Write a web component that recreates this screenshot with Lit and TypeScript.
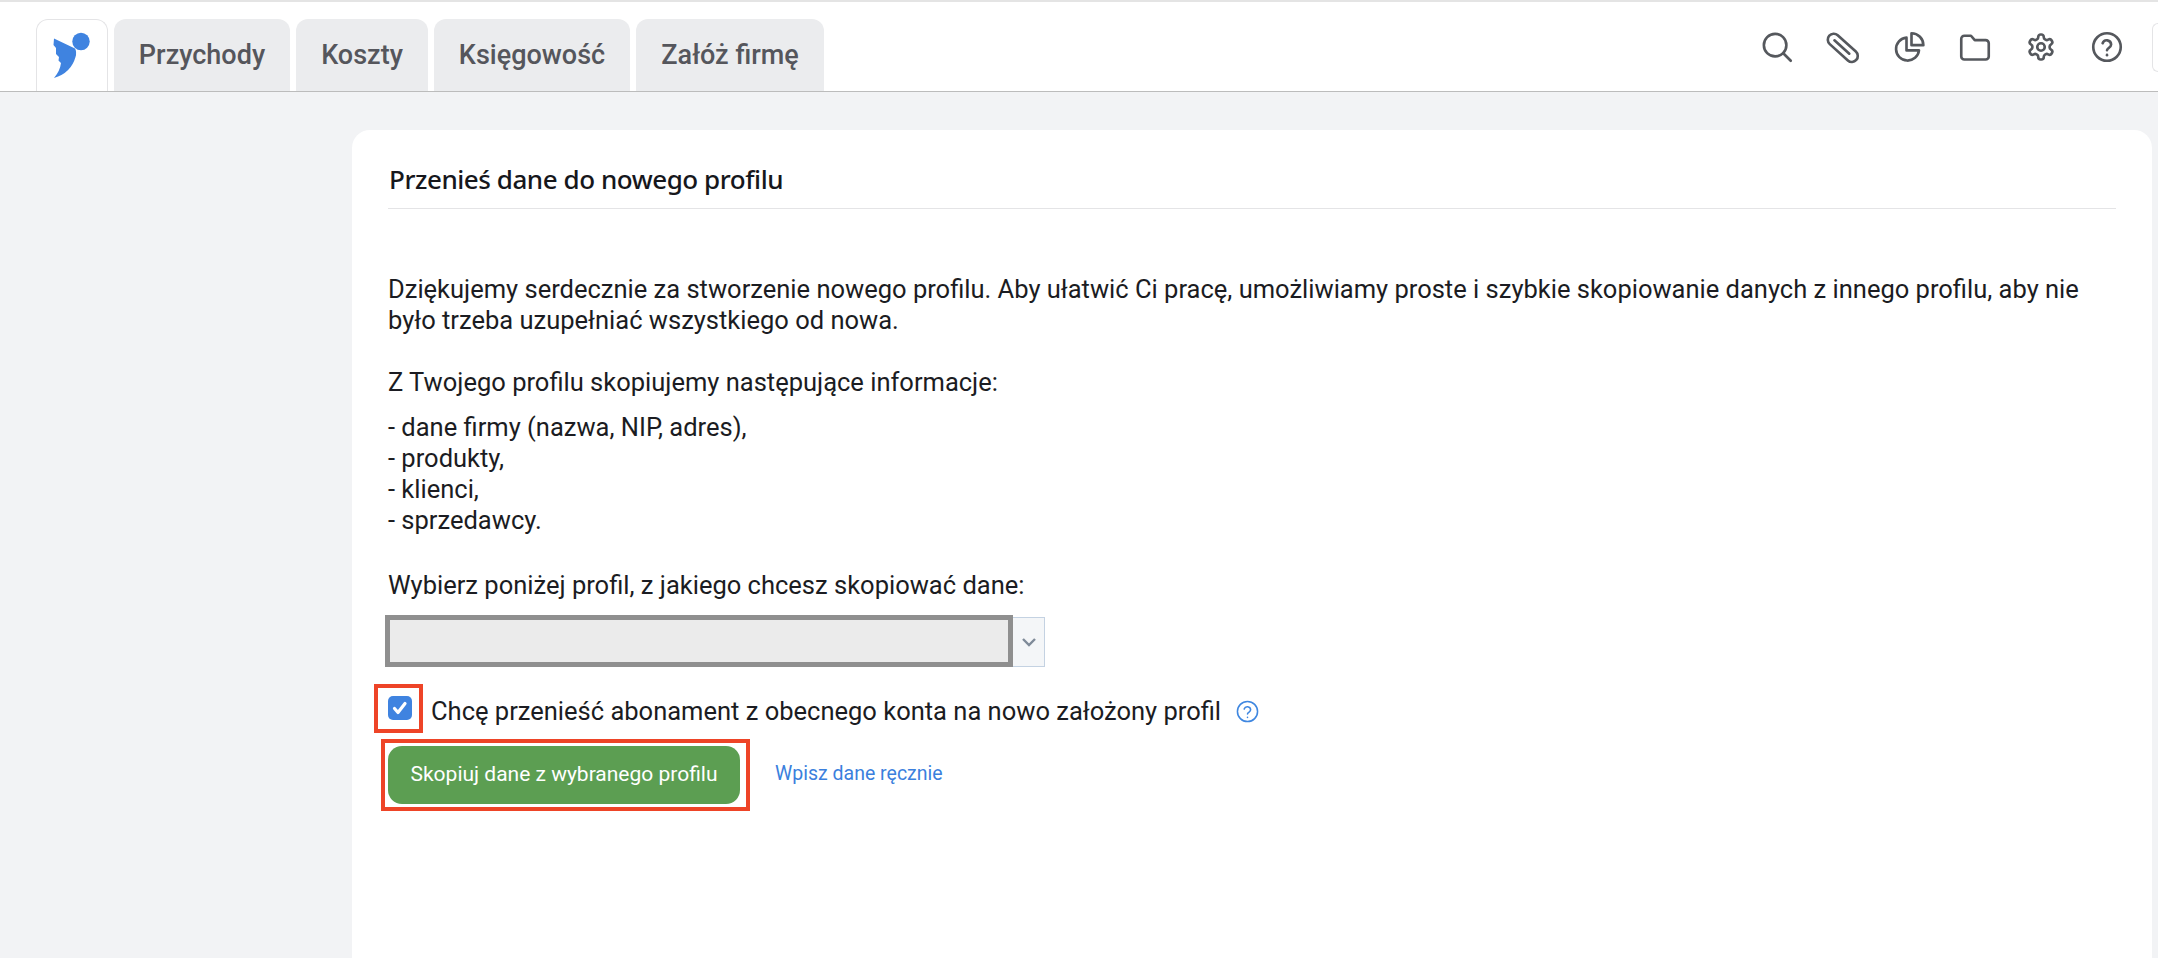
import { LitElement, html, css } from "lit";
import { customElement } from "lit/decorators.js";

@customElement("app-root")
export class AppRoot extends LitElement {
  static styles = css`
    :host { display: block; height: 958px; overflow: hidden; background: #f2f3f5; font-family: Roboto, sans-serif; color: #1b1c22; }
    .topline { height: 2px; background: #e4e4e4; }
    header { height: 90px; box-sizing: border-box; background: #fff; border-bottom: 1px solid #bcbcbc; padding: 17px 0 0 36px; display: flex; align-items: stretch; gap: 6px; position: relative; }
    .logo { width: 72px; box-sizing: border-box; background: #fff; border: 1px solid #e4e4e6; border-bottom: 0; border-radius: 12px 12px 0 0; position: relative; }
    .logo svg { position: absolute; left: -1px; top: -1px; }
    .tab { background: #ebecee; color: #55565c; font-size: 27px; font-weight: 500; border-radius: 12px 12px 0 0; display: flex; align-items: center; justify-content: center; box-sizing: border-box; }
    .icons { margin-left: auto; display: flex; gap: 36px; padding: 13px 36px 0 0; align-items: flex-start; }
    .icons svg { width: 30px; height: 30px; display: block; fill: none; stroke: #55585d; stroke-width: 2.1; stroke-linecap: round; stroke-linejoin: round; overflow: visible; }
    .userbox { position: absolute; right: 0; top: 21px; width: 6px; height: 49px; box-sizing: border-box; border: 1px solid #e4e4e6; border-right: 0; border-radius: 10px 0 0 10px; }
    main { padding: 38px 6px 0 352px; }
    .card { background: #fff; border-radius: 18px 18px 0 0; height: 830px; box-sizing: border-box; padding: 0 36px; }
    h1 { margin: 0; padding: 31px 0 0 1px; height: 79px; box-sizing: border-box; font: 500 26px/36px "Noto Sans", sans-serif; letter-spacing: -0.45px; border-bottom: 1px solid #e4e4e6; color: #16171c; }
    .body { font-size: 25.5px; line-height: 30.8px; }
    p { margin: 0; }
    .p1 { padding-top: 65px; }
    .p2 { padding-top: 31px; }
    .p3 { padding-top: 15px; }
    .p4 { padding-top: 34px; }
    .selectrow { display: flex; margin: 15px 0 0 -3px; width: 660px; height: 52px; }
    .select { width: 628px; box-sizing: border-box; border: 5px solid #8f8f8f; background: #ebebeb; }
    .arrow { flex: 1; margin-top: 2px; box-sizing: border-box; border: 1px solid #c4d2e2; border-left: 0; background: #f4f6f8; display: flex; align-items: center; justify-content: center; }
    .arrow svg { width: 18px; height: 18px; fill: none; stroke: #7f8b99; stroke-width: 2.4; }
    .checkrow { display: flex; align-items: center; margin: 17px 0 0 -14px; height: 49px; }
    .markbox { box-sizing: border-box; border: 4px solid #ee4427; }
    .checkwrap { width: 49px; height: 49px; padding: 8px 0 0 10px; }
    .check { width: 24px; height: 24px; border-radius: 5px; background: #3f83e0; display: flex; align-items: center; justify-content: center; }
    .check svg { width: 16px; height: 16px; fill: none; stroke: #fff; stroke-width: 3.2; stroke-linecap: round; stroke-linejoin: round; }
    .checklabel { margin-left: 8px; position: relative; top: 3px; }
    .help { width: 23px; height: 23px; margin-left: 15px; position: relative; top: 3px; fill: none; stroke: #3f87e0; stroke-width: 1.6; stroke-linecap: round; stroke-linejoin: round; }
    .actions { display: flex; align-items: center; margin: 6px 0 0 -7px; }
    .btnwrap { width: 369px; height: 72px; padding: 3px 6px 3px 3px; }
    button { display: block; width: 100%; height: 100%; border: 0; border-radius: 14px; background: #5c9e52; color: #fff; font: 400 21px/48px Roboto, sans-serif; padding: 0 0 2px; }
    a { margin: -2px 0 0 25px; color: #3b7fdd; font-size: 19.5px; font-weight: 400; text-decoration: none; }
  `;

  render() {
    return html`
      <div class="topline"></div>
      <header>
        <div class="logo">
          <svg width="72" height="72" viewBox="36 19 72 72">
            <circle cx="81" cy="41.5" r="8.7" fill="#3f83e0"></circle>
            <path fill="#3f83e0" d="M54 38.5 L75 48.500 Q77 52 75.500 57 Q71 73 54 78 Q60 71 61 63 L58.500 60.500 L59 57 L56 54 L56 48 L53.500 45 Z"></path>
          </svg>
        </div>
        <div class="tab" style="width:176px">Przychody</div>
        <div class="tab" style="width:132px">Koszty</div>
        <div class="tab" style="width:196px">Księgowość</div>
        <div class="tab" style="width:188px">Załóż firmę</div>
        <div class="icons">
          <svg viewBox="0 0 24 24"><circle cx="10.500" cy="10.500" r="9"></circle><path d="M17 17l6 6"></path></svg>
          <svg viewBox="0 0 24 24"><g transform="rotate(42 12 12.500)"><rect x="-2.500" y="8" width="29" height="9.500" rx="4.750"></rect><path d="M3 12.750H19"></path></g></svg>
          <svg viewBox="0 0 24 24"><path d="M10 4.500a9.200 9.200 0 1 0 10 10.200h-10z"></path><path d="M14 1v9.500h9.500A9.500 9.500 0 0 0 14 1z"></path></svg>
          <svg viewBox="0 0 24 24"><path d="M1 5.500A2.500 2.500 0 0 1 3.500 3h5.300l3 3.500h8.700a2.500 2.500 0 0 1 2.500 2.500v10.500a2.500 2.500 0 0 1-2.500 2.500H3.500A2.500 2.500 0 0 1 1 19.500z"></path></svg>
          <svg viewBox="0 0 24 24"><circle cx="12" cy="12" r="3"></circle><path d="M12.220 2h-.44a2 2 0 0 0-2 2v.18a2 2 0 0 1-1 1.730l-.43.250a2 2 0 0 1-2 0l-.15-.080a2 2 0 0 0-2.730.730l-.220.380a2 2 0 0 0 .730 2.730l.150.100a2 2 0 0 1 1 1.720v.510a2 2 0 0 1-1 1.740l-.150.090a2 2 0 0 0-.730 2.730l.220.380a2 2 0 0 0 2.730.730l.150-.080a2 2 0 0 1 2 0l.430.250a2 2 0 0 1 1 1.730V20a2 2 0 0 0 2 2h.44a2 2 0 0 0 2-2v-.18a2 2 0 0 1 1-1.730l.430-.250a2 2 0 0 1 2 0l.150.080a2 2 0 0 0 2.730-.730l.220-.390a2 2 0 0 0-.730-2.730l-.150-.080a2 2 0 0 1-1-1.740v-.5a2 2 0 0 1 1-1.740l.150-.090a2 2 0 0 0 .730-2.730l-.220-.380a2 2 0 0 0-2.730-.730l-.150.080a2 2 0 0 1-2 0l-.430-.250a2 2 0 0 1-1-1.730V4a2 2 0 0 0-2-2z"></path></svg>
          <svg viewBox="0 0 24 24"><circle cx="12" cy="12" r="11"></circle><path d="M8.500 9a3.500 3.500 0 0 1 6.800 1.100c0 2.300-3.300 2.900-3.300 4.400"></path><path d="M12 18.300v.2"></path></svg>
        </div>
        <div class="userbox"></div>
      </header>
      <main>
        <div class="card">
          <h1>Przenieś dane do nowego profilu</h1>
          <div class="body">
            <p class="p1">Dziękujemy serdecznie za stworzenie nowego profilu. Aby ułatwić Ci pracę, umożliwiamy proste i szybkie skopiowanie danych z innego profilu, aby nie było trzeba uzupełniać wszystkiego od nowa.</p>
            <p class="p2">Z Twojego profilu skopiujemy następujące informacje:</p>
            <p class="p3">- dane firmy (nazwa, NIP, adres),<br />- produkty,<br />- klienci,<br />- sprzedawcy.</p>
            <p class="p4">Wybierz poniżej profil, z jakiego chcesz skopiować dane:</p>
            <div class="selectrow">
              <div class="select"></div>
              <div class="arrow"><svg viewBox="0 0 18 18"><path d="M3 6l6 6 6-6"></path></svg></div>
            </div>
            <div class="checkrow">
              <div class="markbox checkwrap"><div class="check"><svg viewBox="0 0 16 16"><path d="M2.500 8.500l3.500 4 7-9"></path></svg></div></div>
              <span class="checklabel">Chcę przenieść abonament z obecnego konta na nowo założony profil</span>
              <svg class="help" viewBox="0 0 24 24"><circle cx="12" cy="12" r="10.500"></circle><path d="M8.500 9.500a3.500 3.500 0 0 1 6.800 .8c0 2.300-3.300 2.700-3.300 4.200"></path><path d="M12 18v.2"></path></svg>
            </div>
            <div class="actions">
              <div class="markbox btnwrap"><button>Skopiuj dane z wybranego profilu</button></div>
              <a>Wpisz dane ręcznie</a>
            </div>
          </div>
        </div>
      </main>
    `;
  }
}
